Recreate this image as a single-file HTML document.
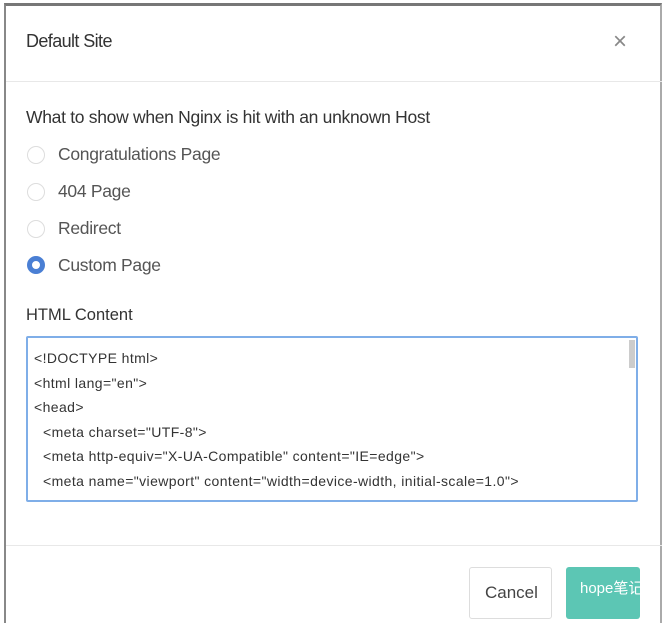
<!DOCTYPE html>
<html><head><style>
body{margin:0;width:664px;height:617px;background:#fff;font-family:"Liberation Sans","Noto Sans CJK SC",sans-serif;position:relative;overflow:hidden;color:#333}
.frame{position:absolute;left:4px;top:3px;width:658px;height:620px;border-left:2px solid #888;border-top:3px solid #777;border-right:2px solid #aaa;box-sizing:border-box}
.t{position:absolute;white-space:nowrap}
.radio{position:absolute;left:27px;width:18px;height:18px;border:1px solid #ddd;border-radius:50%;box-sizing:border-box}
.sel{border:5px solid #4a7fd4;background:#fff}
.ta{position:absolute;left:26px;top:336px;width:612px;height:166px;border:2px solid #7faee8;box-sizing:border-box;border-radius:2px;font-size:14px;color:#333;letter-spacing:0.4px}
.ta div{position:absolute;left:6px;white-space:nowrap}
.opt{font-size:17.5px;color:#555;letter-spacing:-0.3px}
</style></head><body>
<div class="frame"></div>
<div class="t" style="left:26px;top:31px;font-size:18px;letter-spacing:-0.6px;color:#333">Default Site</div>
<div class="t" style="left:613px;top:28px;font-size:24px;color:#888">×</div>
<div style="position:absolute;left:6px;top:81px;width:656px;height:1px;background:#e8e8e8"></div>
<div class="t" style="left:26px;top:107px;font-size:17.5px;letter-spacing:-0.3px;color:#333">What to show when Nginx is hit with an unknown Host</div>
<div class="radio" style="top:146px"></div><div class="t opt" style="left:58px;top:144px">Congratulations Page</div>
<div class="radio" style="top:183px"></div><div class="t opt" style="left:58px;top:181px">404 Page</div>
<div class="radio" style="top:220px"></div><div class="t opt" style="left:58px;top:218px">Redirect</div>
<div class="radio sel" style="top:256px"></div><div class="t opt" style="left:58px;top:255px">Custom Page</div>
<div class="t" style="left:26px;top:306px;font-size:16.5px;color:#333">HTML Content</div>
<div class="ta">
<div style="top:12px">&lt;!DOCTYPE html&gt;</div>
<div style="top:37px">&lt;html lang="en"&gt;</div>
<div style="top:61px">&lt;head&gt;</div>
<div style="top:86px;left:15px">&lt;meta charset="UTF-8"&gt;</div>
<div style="top:110px;left:15px">&lt;meta http-equiv="X-UA-Compatible" content="IE=edge"&gt;</div>
<div style="top:135px;left:15px">&lt;meta name="viewport" content="width=device-width, initial-scale=1.0"&gt;</div>
<div style="left:601px;top:2px;width:6px;height:28px;background:#ccc"></div>
</div>
<div style="position:absolute;left:6px;top:545px;width:656px;height:1px;background:#e8e8e8"></div>
<div style="position:absolute;left:469px;top:567px;width:83px;height:52px;border:1px solid #ddd;box-sizing:border-box;border-radius:3px"></div>
<div class="t" style="left:485px;top:583px;font-size:17px;color:#444">Cancel</div>
<div style="position:absolute;left:566px;top:567px;width:74px;height:52px;background:#5cc6b4;border-radius:3px"></div>
<div class="t" style="left:580px;top:577px;font-size:15px;color:#fff">hope笔记</div>
</body></html>
